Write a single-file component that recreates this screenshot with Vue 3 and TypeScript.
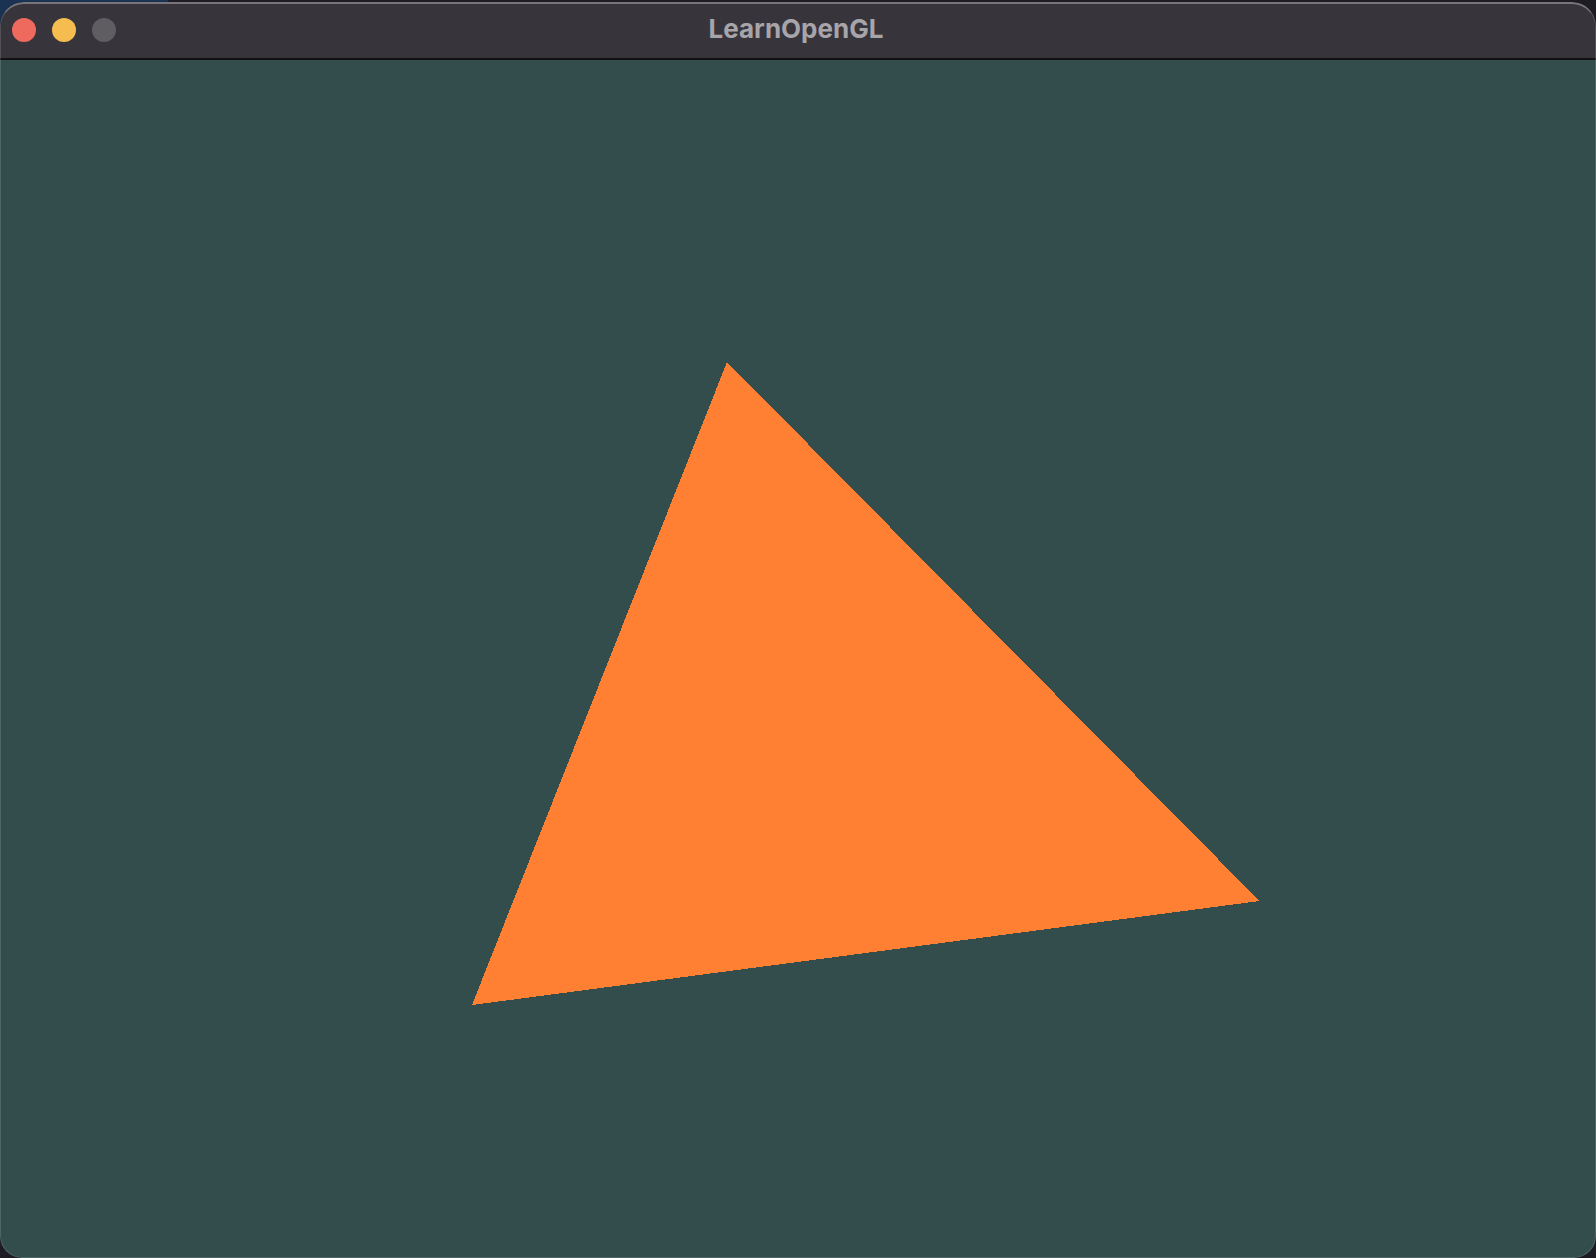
<script setup lang="ts">
const title = 'LearnOpenGL'
const lights: string[] = ['red', 'yellow', 'grey']
</script>

<template>
  <div class="screen">
    <div class="window">
      <header class="titlebar">
        <div class="lights">
          <span v-for="l in lights" :key="l" class="light" :class="l"></span>
        </div>
        <div class="title">{{ title }}</div>
      </header>
      <main class="canvas">
        <svg class="scene" viewBox="0 0 1596 1198" preserveAspectRatio="none" shape-rendering="crispEdges">
          <polygon points="727,302 1259.5,841 472,945" fill="#ff7f33" />
        </svg>
      </main>
    </div>
  </div>
</template>

<style scoped>
.screen {
  width: 1596px;
  height: 1258px;
  box-sizing: border-box;
  padding-top: 2px;
  background: linear-gradient(#1a3352, #1a3352) 0 0 / 168px 30px no-repeat, #1d1c22;
  overflow: hidden;
}
.window {
  position: relative;
  width: 1596px;
  height: 1256px;
  display: flex;
  flex-direction: column;
  border-radius: 24px 24px 22px 22px;
  overflow: hidden;
}
.window::after {
  content: "";
  position: absolute;
  inset: 0;
  box-sizing: border-box;
  border: 1px solid rgba(255, 255, 255, 0.14);
  border-top: 2px solid rgba(255, 255, 255, 0.32);
  border-radius: inherit;
  pointer-events: none;
}
.titlebar {
  position: relative;
  flex: 0 0 58px;
  box-sizing: border-box;
  display: flex;
  align-items: center;
  justify-content: center;
  padding: 0 4px 2px 0;
  background: #38343c;
  border-bottom: 2px solid #111013;
}
.lights {
  position: absolute;
  left: 12px;
  top: 16px;
  display: flex;
  gap: 16px;
}
.light {
  width: 24px;
  height: 24px;
  border-radius: 50%;
}
.red { background: #ee6a5f; }
.yellow { background: #f5bd4f; }
.grey { background: #5f5c62; }
.title {
  font-family: Inter, "Liberation Sans", sans-serif;
  font-size: 26px;
  font-weight: 700;
  color: #a7a4aa;
  line-height: 1;
}
.canvas {
  flex: 1;
  min-height: 0;
  background: #334d4d;
}
.scene {
  display: block;
  width: 100%;
  height: 100%;
}
</style>
